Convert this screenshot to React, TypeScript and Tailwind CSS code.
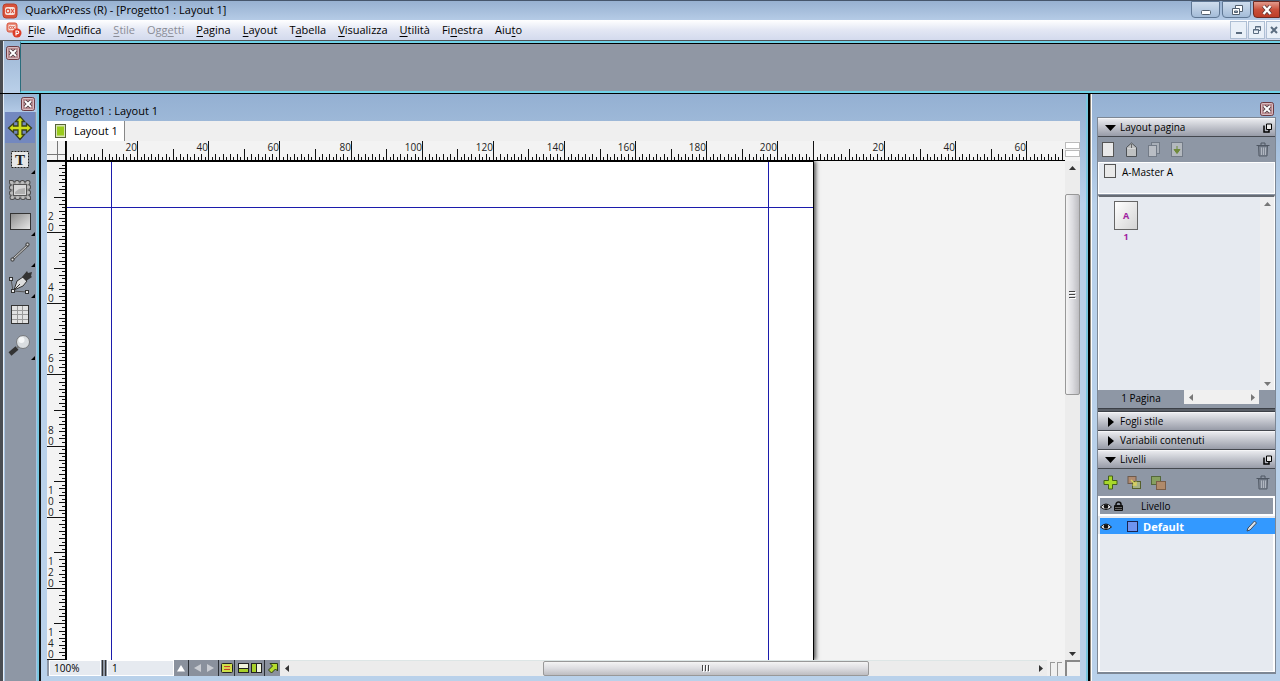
import type { ReactNode } from 'react';

const PX_PER_MM = 3.557;
const PAGE_WIDTH_MM = 210;

type Tick = { pos: number; mm: number };

const makeTicks = (from: number, count: number): Tick[] =>
  Array.from({ length: count }, (_, mm) => ({
    pos: Math.round(from + mm * PX_PER_MM),
    mm,
  }));

const tickLength = (mm: number) => {
  if (mm % 20 === 0) return 19;
  if (mm % 10 === 0) return 11;
  return mm % 2 === 0 ? 6 : 3;
};

const menus = [
  { before: '', key: 'F', after: 'ile' },
  { before: 'M', key: 'o', after: 'difica' },
  { before: '', key: 'S', after: 'tile', disabled: true },
  { before: 'Ogg', key: 'e', after: 'tti', disabled: true },
  { before: '', key: 'P', after: 'agina' },
  { before: '', key: 'L', after: 'ayout' },
  { before: 'T', key: 'a', after: 'bella' },
  { before: '', key: 'V', after: 'isualizza' },
  { before: '', key: 'U', after: 'tilità' },
  { before: 'Fi', key: 'n', after: 'estra' },
  { before: 'Aiu', key: 't', after: 'o' },
];

const AppIcon = () => (
  <svg width="16" height="16" viewBox="0 0 16 16">
    <rect x="1" y="1" width="14" height="14" rx="3" fill="#d9523a" stroke="#b8412d" />
    <rect x="3" y="4" width="10" height="8" rx="2" fill="#f6e3dd" />
    <circle cx="6" cy="8" r="1.8" fill="none" stroke="#d9523a" strokeWidth="1.2" />
    <path d="M9 6l3 4M12 6l-3 4" stroke="#d9523a" strokeWidth="1.2" />
  </svg>
);

const DocumentIcon = () => (
  <svg width="16" height="16" viewBox="0 0 16 16">
    <rect x="1" y="1" width="10" height="9" rx="2" fill="#e8907f" stroke="#d9523a" />
    <rect x="2.500" y="3" width="7" height="5" rx="1" fill="#f8e6e1" />
    <circle cx="4.500" cy="5.500" r="1.200" fill="none" stroke="#d9523a" />
    <path d="M6.500 4l2 3M8.500 4l-2 3" fill="none" stroke="#d9523a" strokeWidth="0.900" />
    <circle cx="11" cy="11" r="4.500" fill="#dc3d28" />
    <path d="M10 13.500V9h1.500a1.300 1.300 0 0 1 0 2.600H10" fill="none" stroke="#fff" strokeWidth="1.100" />
  </svg>
);

const CloseButton = () => (
  <button type="button" aria-label="Chiudi" className="block size-[14px]">
    <svg width="14" height="14" viewBox="0 0 14 14">
      <rect x="0.500" y="0.500" width="13" height="13" rx="2" fill="#b98a8f" stroke="#6d3b43" />
      <rect x="1.500" y="1.500" width="11" height="11" rx="1" fill="none" stroke="#d9bcc0" />
      <path d="M4 4l6 6M10 4l-6 6" stroke="#4b3a40" strokeWidth="3.600" />
      <path d="M4 4l6 6M10 4l-6 6" stroke="#fff" strokeWidth="2" />
    </svg>
  </button>
);

const MinimizeGlyph = () => (
  <svg width="12" height="12" viewBox="0 0 12 12">
    <rect x="1.500" y="6.500" width="9" height="4" rx="1" fill="#fff" stroke="#53606f" />
  </svg>
);

const RestoreGlyph = () => (
  <svg width="12" height="12" viewBox="0 0 12 12">
    <path d="M4.500 1.500h7v6h-7z" fill="#fff" stroke="#53606f" />
    <path d="M1.500 4.500h7v6h-7z" fill="#fff" stroke="#53606f" />
    <path d="M3.500 7h3v1.500h-3z" fill="#9fb7d4" stroke="#53606f" />
  </svg>
);

const CloseGlyph = () => (
  <svg width="12" height="12" viewBox="0 0 12 12">
    <path d="M2.500 2l7 8M9.500 2l-7 8" stroke="#5e3a3a" strokeWidth="4" />
    <path d="M2.500 2l7 8M9.500 2l-7 8" stroke="#fff" strokeWidth="2.400" />
  </svg>
);

const TitleBar = () => (
  <header className="flex h-5 shrink-0 items-center border-t border-[#46566c] bg-linear-to-b from-[#97b1d1] to-[#b5cbe6] pl-[2px]">
    <AppIcon />
    <h1 className="ml-[7px] flex-1 text-[11px] text-black">QuarkXPress (R) - [Progetto1 : Layout 1]</h1>
    <div className="flex gap-[2px] self-start">
      <button type="button" aria-label="Riduci a icona" className="flex h-[17px] w-[29px] items-center justify-center rounded-b border border-[#5f7794] bg-linear-to-b from-[#cfdded] to-[#a4bcd8]">
        <MinimizeGlyph />
      </button>
      <button type="button" aria-label="Ripristina" className="flex h-[17px] w-[29px] items-center justify-center rounded-b border border-[#5f7794] bg-linear-to-b from-[#cfdded] to-[#a4bcd8]">
        <RestoreGlyph />
      </button>
      <button type="button" aria-label="Chiudi finestra" className="flex h-[17px] w-[27px] items-center justify-center rounded-bl border border-[#6d2a22] bg-linear-to-b from-[#e29a8c] via-[#c9503b] to-[#bd3e28]">
        <CloseGlyph />
      </button>
    </div>
  </header>
);

const MenuBar = () => (
  <nav className="flex h-5 shrink-0 items-center bg-linear-to-b from-white via-[#e3e7f4] to-[#d3daed] pl-[6px]">
    <DocumentIcon />
    <div className="ml-[6px] flex flex-1 gap-3">
      {menus.map(({ before, key, after, disabled }) => (
        <button
          key={before + key + after}
          type="button"
          disabled={disabled}
          className="text-[11px] leading-4 text-black disabled:text-[#8b8d97]"
        >
          {before}
          <span className="underline underline-offset-2">{key}</span>
          {after}
        </button>
      ))}
    </div>
    <div className="flex gap-px">
      <button type="button" aria-label="Riduci documento" className="flex h-[18px] w-[17px] items-center justify-center border border-[#aebfd4] bg-[#e9f0f8]">
        <svg width="10" height="10" viewBox="0 0 10 10">
          <path d="M2 8h6" stroke="#5b6d80" strokeWidth="2" />
        </svg>
      </button>
      <button type="button" aria-label="Ripristina documento" className="flex h-[18px] w-[17px] items-center justify-center border border-[#aebfd4] bg-[#e9f0f8]">
        <svg width="10" height="10" viewBox="0 0 10 10">
          <path d="M3.500 4V1.500h5v4H7M3 2h6" fill="none" stroke="#5b6d80" />
          <path d="M1.500 4.500h5v4h-5zM1 5h6" fill="none" stroke="#5b6d80" />
        </svg>
      </button>
      <button type="button" aria-label="Chiudi documento" className="flex h-[18px] w-[14px] items-center justify-center border border-r-0 border-[#aebfd4] bg-[#e9f0f8]">
        <svg width="10" height="10" viewBox="0 0 10 10">
          <path d="M2 2l6 6M8 2l-6 6" stroke="#5b6d80" strokeWidth="2" />
        </svg>
      </button>
    </div>
  </nav>
);

const MeasurementsBar = () => (
  <section className="flex h-[53px] shrink-0 border-t border-[#55585c] bg-[#4a4d52] pl-[3px]">
    <div className="w-[17px] border-l border-[#dfe8f2] bg-linear-to-b from-[#9ab4d3] to-[#bad0e9] pt-[5px] pl-[2px]">
      <CloseButton />
    </div>
    <div className="flex-1 border-y-2 border-l border-[#70d2e8] border-l-[#2a6d7c] bg-[#9097a4]">
      <div className="h-full border-t border-black" />
    </div>
  </section>
);

const tools: { name: string; flyout?: boolean; icon: ReactNode }[] = [
  {
    name: 'Elemento',
    icon: (
      <svg width="26" height="26" viewBox="0 0 26 26">
        <path
          d="M13 1.500l4.500 5H15V11h4.500V8.500l5 4.500-5 4.500V15H15v4.500h2.500l-4.500 5-4.500-5H11V15H6.500v2.500l-5-4.500 5-4.500V11H11V6.500H8.500z"
          fill="#cfe01c"
          stroke="#39411a"
          strokeWidth="1.300"
        />
      </svg>
    ),
  },
  {
    name: 'Contenuto testo',
    flyout: true,
    icon: (
      <svg width="26" height="26" viewBox="0 0 26 26">
        <rect x="4.500" y="5.500" width="17" height="16" fill="#e7e7e7" stroke="#222" strokeDasharray="2 1" />
        <text x="13" y="19" textAnchor="middle" fontSize="15" fontWeight="700" fontFamily="Liberation Serif" fill="#222">
          T
        </text>
      </svg>
    ),
  },
  {
    name: 'Contenuto immagine',
    icon: (
      <svg width="26" height="26" viewBox="0 0 26 26">
        <rect x="4.500" y="5.500" width="17" height="15" fill="none" stroke="#4c4c4c" strokeWidth="5" strokeLinecap="round" strokeDasharray="0.500 4.830" />
        <rect x="4.500" y="5.500" width="17" height="15" fill="#999" stroke="#bcbcbc" strokeWidth="3" strokeLinecap="round" strokeDasharray="0.500 4.830" />
        <rect x="6.500" y="7.500" width="13" height="11" fill="#d8d8d8" stroke="#555" />
        <path d="M8 15l4-3 6-1v6H8z" fill="#b0b0b0" />
      </svg>
    ),
  },
  {
    name: 'Riquadro rettangolare',
    flyout: true,
    icon: (
      <svg width="26" height="26" viewBox="0 0 26 26">
        <defs>
          <linearGradient id="box" x1="0" y1="0" x2="1" y2="1">
            <stop offset="0" stopColor="#8b8b8b" />
            <stop offset="1" stopColor="#e8e8e8" />
          </linearGradient>
        </defs>
        <rect x="3.500" y="5.500" width="20" height="16" fill="url(#box)" stroke="#333" />
      </svg>
    ),
  },
  {
    name: 'Linea',
    flyout: true,
    icon: (
      <svg width="26" height="26" viewBox="0 0 26 26">
        <path d="M6 20L21 6" stroke="#555" strokeWidth="2.500" />
        <path d="M6 20L21 6" stroke="#ddd" />
        <rect x="4" y="19" width="3" height="3" rx="1" fill="#ddd" stroke="#333" />
        <rect x="19" y="4" width="3" height="3" rx="1" fill="#ddd" stroke="#333" />
      </svg>
    ),
  },
  {
    name: 'Penna Bézier',
    flyout: true,
    icon: (
      <svg width="26" height="26" viewBox="0 0 26 26">
        <path d="M4 9l2 12 14 1" fill="none" stroke="#555" />
        <path d="M7 20l3-9 6-4 4 4-4 5z" fill="#dedede" stroke="#333" />
        <path d="M7 20l6-6" stroke="#333" />
        <path d="M15 7l5-6 1 2 4-1-1 4 1 1-6 4z" fill="#333" />
        <rect x="2.500" y="7.500" width="3" height="3" fill="#eee" stroke="#333" />
        <rect x="4.500" y="19.500" width="3" height="3" fill="#eee" stroke="#333" />
        <rect x="18.500" y="20.500" width="3" height="3" fill="#eee" stroke="#333" />
      </svg>
    ),
  },
  {
    name: 'Tabella',
    icon: (
      <svg width="26" height="26" viewBox="0 0 26 26">
        <rect x="4.500" y="4.500" width="17" height="18" fill="#e2e2e2" stroke="#333" />
        <path d="M10.500 5v17M15.500 5v17M5 9.500h16M5 13.500h16M5 18.500h16" stroke="#999" />
      </svg>
    ),
  },
  {
    name: 'Zoom',
    flyout: true,
    icon: (
      <svg width="26" height="26" viewBox="0 0 26 26">
        <path d="M3 22l7-6" stroke="#333" strokeWidth="4.500" />
        <path d="M10 16l2-2" stroke="#777" strokeWidth="2" />
        <circle cx="16" cy="10" r="6.500" fill="#d9dde0" stroke="#77797c" />
        <circle cx="14.500" cy="8" r="3" fill="#f5f7f8" />
      </svg>
    ),
  },
];

const Toolbox = () => (
  <aside className="flex w-[41px] shrink-0 border-r-2 border-[#111] bg-[#4a4d52] pl-[3px]">
    <div className="flex flex-1 flex-col border-r-2 border-l border-[#79c6df] border-l-[#e6eef6] bg-[#a9c3e0]">
      <div className="flex h-[18px] justify-end bg-linear-to-b from-[#9ab4d3] to-[#b3cae6] pt-[3px] pr-[2px]">
        <CloseButton />
      </div>
      <div className="mr-px ml-px flex flex-1 flex-col bg-[#8e97a5] pr-px">
        {tools.map(({ name, flyout, icon }, index) => (
          <button
            key={name}
            type="button"
            aria-label={name}
            aria-pressed={index === 0}
            className="relative flex h-[31px] items-center justify-center aria-pressed:bg-[#7388bf]"
          >
            {icon}
            {flyout && (
              <svg width="4" height="4" className="absolute right-0 bottom-0">
                <path d="M4 0v4H0z" fill="#000" />
              </svg>
            )}
          </button>
        ))}
      </div>
    </div>
  </aside>
);

const horizontalTicks = [
  ...makeTicks(19, PAGE_WIDTH_MM),
  ...makeTicks(19 + PAGE_WIDTH_MM * PX_PER_MM, 71),
];

const HorizontalRuler = () => (
  <div className="h-5 min-w-0 flex-1 overflow-hidden border-b border-black bg-[#f3f3f3]">
    <svg width="1018" height="19" className="block">
      <path d="M0 13.500h19M10.500 0v19" stroke="#777" />
      <path d="M19 0v19" stroke="#000" strokeWidth="2" />
      {horizontalTicks.map(({ pos, mm }) => (
        <g key={pos}>
          <path d={`M${pos + 0.5} ${19 - tickLength(mm)}V19`} stroke="#111" />
          {mm > 0 && mm % 20 === 0 && (
            <text x={pos} y="10" textAnchor="end" fontSize="10" fill="#222">
              {mm}
            </text>
          )}
        </g>
      ))}
    </svg>
  </div>
);

const verticalTicks = makeTicks(0, 141);

const VerticalRuler = () => (
  <div className="w-5 shrink-0 overflow-hidden border-r-2 border-black bg-[#f3f3f3]">
    <svg width="18" height="499" className="block">
      {verticalTicks.map(({ pos, mm }) => {
        const digits = String(mm).split('');
        return (
          <g key={pos}>
            <path d={`M${18 - tickLength(mm)} ${pos + 0.5}H18`} stroke="#111" />
            {mm > 0 && mm % 20 === 0 && (
              <text y={pos - 1 - digits.length * 11} fontSize="10" fill="#222">
                {digits.map((digit, i) => (
                  <tspan key={i} x="1" dy="11">
                    {digit}
                  </tspan>
                ))}
              </text>
            )}
          </g>
        );
      })}
    </svg>
  </div>
);

type Direction = 'up' | 'down' | 'left' | 'right';

const arrowPaths: Record<Direction, string> = {
  up: 'M0 5l3.500-4L7 5z',
  down: 'M0 2l3.500 4L7 2z',
  left: 'M5 0L1 3.500 5 7z',
  right: 'M2 0l4 3.500L2 7z',
};

const ScrollArrow = ({ direction, color = '#333' }: { direction: Direction; color?: string }) => (
  <button type="button" aria-label={direction} className="flex size-[14px] shrink-0 items-center justify-center">
    <svg width="7" height="7" viewBox="0 0 7 7">
      <path d={arrowPaths[direction]} fill={color} />
    </svg>
  </button>
);

const VerticalScrollbar = () => (
  <div className="flex w-[15px] shrink-0 flex-col bg-[#ececec]">
    <ScrollArrow direction="up" />
    <div className="grow-19 basis-0" />
    <div className="flex grow-200 basis-0 items-center justify-center rounded-xs border border-[#989898] bg-linear-to-r from-[#f4f4f4] via-[#dcdce0] to-[#bdbdc1]">
      <svg width="7" height="8">
        <path d="M0 .5h6M0 3.500h6M0 6.500h6" stroke="#444" />
        <path d="M1 1.500h6M1 4.500h6M1 7.500h6" stroke="#fff" />
      </svg>
    </div>
    <div className="grow-252 basis-0" />
    <ScrollArrow direction="down" />
  </div>
);

const HorizontalScrollbar = () => (
  <div className="flex min-w-0 flex-1 items-stretch border-t border-[#dde6e6] bg-[#ececec]">
    <ScrollArrow direction="left" />
    <div className="grow-250 basis-0" />
    <div className="flex grow-325 basis-0 items-center justify-center rounded-xs border border-[#989898] bg-linear-to-b from-[#f4f4f4] via-[#dcdce0] to-[#bdbdc1]">
      <svg width="8" height="7">
        <path d="M.5 0v6M3.500 0v6M6.500 0v6" stroke="#444" />
        <path d="M1.500 1v6M4.500 1v6M7.500 1v6" stroke="#fff" />
      </svg>
    </div>
    <div className="grow-164 basis-0" />
    <ScrollArrow direction="right" />
  </div>
);

const Canvas = () => (
  <div className="min-w-0 flex-1 overflow-hidden bg-[#f3f3f3]">
    <div className="relative h-full w-[747px] border-t border-r border-black bg-white shadow-[2px_0_4px_#555]">
      <div className="absolute inset-x-0 top-[45px] border-t border-[#1c1cac]" />
      <div className="absolute inset-y-0 left-[44px] border-l border-[#1c1cac]" />
      <div className="absolute inset-y-0 right-[44px] border-l border-[#1c1cac]" />
    </div>
  </div>
);

const StatusBar = () => (
  <div className="flex h-4 shrink-0 bg-[#8e97a5]">
    <input
      aria-label="Zoom"
      defaultValue="100%"
      className="ml-[2px] w-[52px] border border-white bg-[#e6eaf0] pl-1 text-[10px] text-black"
    />
    <div className="ml-px w-[4px] border-x border-[#333]" />
    <input
      aria-label="Pagina"
      defaultValue="1"
      className="ml-px w-[67px] border border-white bg-[#e6eaf0] pl-1 text-[10px] text-black"
    />
    <div className="flex divide-x divide-[#2c3036] bg-[#8a919d]">
      <button type="button" aria-label="Pagina mastro" className="flex w-[15px] items-center justify-center">
        <svg width="8" height="7">
          <path d="M0 6.500L4 0l4 6.500z" fill="#fff" />
        </svg>
      </button>
      <div className="flex w-[30px] items-center justify-center gap-[6px]">
        <button type="button" aria-label="Pagina precedente">
          <svg width="7" height="8" className="block">
            <path d="M7 0v8L0 4z" fill="#c9ccd2" />
          </svg>
        </button>
        <button type="button" aria-label="Pagina successiva">
          <svg width="7" height="8" className="block">
            <path d="M0 0v8l7-4z" fill="#c9ccd2" />
          </svg>
        </button>
      </div>
      <button type="button" aria-label="Anteprima" className="flex w-4 items-center justify-center">
        <svg width="12" height="10">
          <rect x=".5" y=".5" width="11" height="9" rx="1" fill="#cfe04a" stroke="#222" />
          <path d="M3 3.500h6M3 6.500h6" stroke="#c2452b" />
          <path d="M4 5h6" stroke="#f3b04a" />
        </svg>
      </button>
      <div className="flex w-[30px] items-center justify-center gap-[2px]">
        <button type="button" aria-label="Dividi orizzontalmente">
          <svg width="11" height="10" className="block">
            <rect x=".5" y=".5" width="10" height="9" fill="#f0f4dc" stroke="#222" />
            <path d="M1 6h9v3H1z" fill="#a8d02a" />
            <path d="M1 5.500h9" stroke="#222" />
          </svg>
        </button>
        <button type="button" aria-label="Dividi verticalmente">
          <svg width="11" height="10" className="block">
            <rect x=".5" y=".5" width="10" height="9" fill="#f0f4dc" stroke="#222" />
            <path d="M1 1h4v8H1z" fill="#a8d02a" />
            <path d="M5.500 1v8" stroke="#222" />
          </svg>
        </button>
      </div>
      <button type="button" aria-label="Esporta" className="flex w-[15px] items-center justify-center">
        <svg width="12" height="12" viewBox="0 0 12 12">
          <path d="M3 1.500h7.500V9L8.500 7l-4 4-3-3 4-4z" fill="#b5dc2c" stroke="#2c3a10" />
        </svg>
      </button>
    </div>
    <HorizontalScrollbar />
    <div className="flex w-[18px] justify-center gap-[2px] bg-[#f0f0f0] pt-[2px]">
      <div className="w-[5px] border-t border-l border-[#999]" />
      <div className="w-[5px] border-t border-l border-[#999]" />
    </div>
    <div className="w-[15px] border-t-2 border-l-2 border-[#888] bg-[#f0f0f0]" />
  </div>
);

const DocumentWindow = () => (
  <main className="flex min-w-0 flex-1 flex-col bg-[#b9d1ea] bg-linear-to-b from-[#94b0d2] to-[#b9d1ea] to-[110px] px-[6px] pb-[5px]">
    <h2 className="flex h-[27px] shrink-0 items-center pt-[7px] pl-2 text-[11px] text-black">Progetto1 : Layout 1</h2>
    <div className="flex h-5 shrink-0 bg-[#efefef]">
      <button type="button" className="flex items-center gap-2 border-r border-[#888] bg-white pr-[6px] pl-2 text-[11px] text-black">
        <svg width="11" height="14">
          <rect x=".5" y=".5" width="10" height="13" fill="#d8e3b4" stroke="#56633a" />
          <rect x="2" y="2.500" width="7" height="9" fill="#9acb1c" />
        </svg>
        Layout 1
      </button>
    </div>
    <div className="flex shrink-0">
      <HorizontalRuler />
      <div className="flex w-[15px] flex-col gap-px bg-[#f3f3f3] pt-px">
        <div className="h-[7px] border border-[#bbb] bg-white" />
        <div className="h-[7px] border border-[#bbb] bg-white" />
      </div>
    </div>
    <div className="flex min-h-0 flex-1">
      <VerticalRuler />
      <Canvas />
      <VerticalScrollbar />
    </div>
    <StatusBar />
  </main>
);

const SectionHeader = ({ title, open }: { title: string; open?: boolean }) => (
  <button
    type="button"
    aria-expanded={!!open}
    className="flex h-[19px] w-full shrink-0 items-center border-y border-t-[#f5f5f7] border-b-[#44484f] bg-linear-to-b from-[#e9eaee] to-[#989ca8] pr-[2px] pl-[7px] text-left text-[10px] text-black"
  >
    <svg width="12" height="10" className="mr-[3px]">
      <path d={open ? 'M0 2h11L5.500 8z' : 'M3 0v10l6-5z'} fill="#000" />
    </svg>
    <span className="flex-1">{title}</span>
    {open && (
      <svg width="10" height="10">
        <path d="M3.500 1v5.500h5V1z" fill="#e8e8e8" stroke="#000" />
        <path d="M1 2.500v6.500h5V7" fill="none" stroke="#000" strokeWidth="1.500" />
      </svg>
    )}
  </button>
);

const TrashIcon = () => (
  <svg width="14" height="15" viewBox="0 0 14 15">
    <path d="M2.500 4h9l-.5 10H3z" fill="#7d8592" stroke="#565e6a" />
    <path d="M.5 3.500h13M5 3V1h4v2" fill="none" stroke="#4f5763" />
    <path d="M5.500 5.500V13M7.500 5.500V13M9.500 5.500V13" stroke="#b0b6c0" />
  </svg>
);

const IconButton = ({ label, children }: { label: string; children: ReactNode }) => (
  <button type="button" aria-label={label} className="flex size-4 items-center justify-center">
    {children}
  </button>
);

const PageLayoutSection = () => (
  <section className="flex shrink-0 flex-col">
    <SectionHeader title="Layout pagina" open />
    <div className="flex h-[25px] items-center gap-[7px] pr-1 pl-[2px]">
      <IconButton label="Nuova pagina">
        <svg width="12" height="15">
          <rect x=".5" y=".5" width="11" height="14" fill="#e9e9e9" stroke="#555" />
        </svg>
      </IconButton>
      <IconButton label="Inserisci sezione">
        <svg width="13" height="16">
          <path d="M1.500 5.500L6.500 1l5 4.500v9h-10z" fill="#bfc1c2" stroke="#4c5054" />
          <path d="M6.500 2v4" fill="none" stroke="#666" />
          <path d="M2.500 6.500h8" stroke="#d6d8d8" />
        </svg>
      </IconButton>
      <IconButton label="Duplica pagina">
        <svg width="14" height="15">
          <rect x="4.500" y=".5" width="8" height="11" fill="#a9afb8" stroke="#737b87" />
          <rect x="1.500" y="3.500" width="8" height="11" fill="#b9bdc4" stroke="#737b87" />
        </svg>
      </IconButton>
      <IconButton label="Applica mastro">
        <svg width="12" height="15">
          <rect x=".5" y=".5" width="11" height="14" fill="#b3b8be" stroke="#737b87" />
          <path d="M6 4v4M3 7.500h6L6 11.500z" fill="#6f8a3a" stroke="#6f8a3a" />
        </svg>
      </IconButton>
      <div className="flex-1" />
      <IconButton label="Elimina pagina">
        <TrashIcon />
      </IconButton>
    </div>
    <div className="flex h-8 items-start border border-white bg-[#e6eaf0] pt-px pl-[5px]">
      <svg width="12" height="15">
        <rect x=".5" y=".5" width="11" height="13" fill="#e9e9e9" stroke="#555" />
      </svg>
      <span className="ml-[6px] text-[10px] leading-4 text-black">A-Master A</span>
    </div>
    <div className="mt-px flex h-[195px] border border-t-2 border-b-0 border-white border-t-[#666b73] bg-[#e6eaf0]">
      <div className="flex-1 pt-1 pl-[15px]">
        <button type="button" className="flex w-6 flex-col items-center text-[9px] font-bold text-[#a020a0]">
          <span className="flex h-[29px] w-6 items-center justify-center border border-[#666] bg-linear-to-br from-white to-[#d4d4d4]">
            A
          </span>
          <span className="leading-[14px]">1</span>
        </button>
      </div>
      <div className="flex w-[14px] flex-col justify-between bg-[#eeeeef]">
        <ScrollArrow direction="up" color="#777" />
        <ScrollArrow direction="down" color="#777" />
      </div>
    </div>
    <div className="flex h-[14px]">
      <span className="flex-1 text-center text-[10px] leading-4 text-black">1 Pagina</span>
      <div className="mr-4 flex w-[75px] justify-between bg-[#f0f0f0]">
        <ScrollArrow direction="left" color="#777" />
        <ScrollArrow direction="right" color="#777" />
      </div>
    </div>
    <div className="mt-1 h-1 border-y border-[#3c4047] bg-[#5a5f67]" />
  </section>
);

const EyeIcon = () => (
  <svg width="12" height="9" viewBox="0 0 12 9">
    <path d="M.5 5Q6-1 11.500 5 6 10 .5 5z" fill="#e8e8e8" stroke="#111" />
    <circle cx="6" cy="4.500" r="2.300" fill="#111" />
  </svg>
);

const LayersSection = () => (
  <section className="flex min-h-0 flex-1 flex-col">
    <SectionHeader title="Livelli" open />
    <div className="flex h-[27px] shrink-0 items-center gap-2 px-1">
      <IconButton label="Nuovo livello">
        <svg width="15" height="15">
          <path d="M5.500 1h4v4.500H14v4H9.500V14h-4V9.500H1v-4h4.500z" fill="#a8d82a" stroke="#44601a" />
        </svg>
      </IconButton>
      <IconButton label="Sposta elemento">
        <svg width="15" height="15">
          <rect x="1" y="1.500" width="8" height="7" fill="#b08a70" stroke="#6d5a4c" />
          <rect x="5.500" y="6.500" width="8" height="7" fill="#a5b183" stroke="#56602c" />
          <path d="M4 5l5 5M9 6.500V10H5.500" fill="none" stroke="#d8d060" strokeWidth="1.500" />
        </svg>
      </IconButton>
      <IconButton label="Unisci livelli">
        <svg width="15" height="15">
          <rect x=".5" y="1.500" width="9" height="8" fill="#86a060" stroke="#54683a" />
          <rect x="5.500" y="6.500" width="9" height="8" fill="#b08a6a" stroke="#7a5e48" />
        </svg>
      </IconButton>
      <div className="flex-1" />
      <IconButton label="Elimina livello">
        <TrashIcon />
      </IconButton>
    </div>
    <table className="w-full shrink-0 border-separate border-spacing-0 bg-[#e6eaf0] text-left text-black">
      <thead>
        <tr className="h-[20px] bg-[#8e97a5] text-[10px] leading-none">
          <th className="w-[25px] border-2 border-r-0 border-white p-0 font-normal">
            <div className="flex items-center gap-[2px]">
              <EyeIcon />
              <svg width="9" height="10">
                <path d="M2 5V3.500a2.500 2.500 0 0 1 5 0V5" fill="none" stroke="#111" strokeWidth="1.500" />
                <rect x="0" y="4" width="9" height="6" rx="1" fill="#111" />
                <path d="M1 6.500h7M1 8.500h7" stroke="#666" />
              </svg>
            </div>
          </th>
          <th colSpan={2} className="border-2 border-l-0 border-white py-0 pr-0 pl-[18px] font-normal">Livello</th>
        </tr>
      </thead>
      <tbody>
        <tr className="h-[18px] bg-[#3399ff] text-[11px] leading-none text-white">
          <td className="border-t-2 border-l-2 border-[#e6eaf0] p-0"><EyeIcon /></td>
          <td className="border-t-2 border-[#e6eaf0] py-0 pl-1">
            <div className="flex items-center gap-[5px] font-bold">
              <svg width="11" height="11">
                <rect x=".5" y=".5" width="10" height="10" fill="#6f94f0" stroke="#1a2450" />
              </svg>
              Default
            </div>
          </td>
          <td className="w-[29px] border-t-2 border-[#e6eaf0] p-0">
            <svg width="11" height="12">
              <path d="M1 11l1-3 6.500-7 2 2L4 10z" fill="#dde3ea" stroke="#3d4a5c" />
            </svg>
          </td>
        </tr>
      </tbody>
    </table>
    <div className="flex-1 border-x-2 border-t-0 border-b border-white bg-[#e6eaf0]" />
  </section>
);

const Palettes = () => (
  <aside className="flex w-[194px] shrink-0 border-l-2 border-[#79c6df] bg-[#b9d1ea]">
    <div className="w-1 border-r border-l-2 border-white border-l-black bg-[#8a8378]" />
    <div className="flex min-w-0 flex-1 flex-col bg-linear-to-b from-[#94b0d2] to-[#b9d1ea] to-[110px] pr-1 pb-[7px] pl-[5px]">
      <div className="flex h-[23px] shrink-0 items-end justify-end pr-[2px] pb-px">
        <CloseButton />
      </div>
      <div className="flex min-h-0 flex-1 flex-col border border-b-2 border-[#7d8794] bg-[#8e97a5]">
        <PageLayoutSection />
        <SectionHeader title="Fogli stile" />
        <SectionHeader title="Variabili contenuti" />
        <LayersSection />
      </div>
    </div>
  </aside>
);

const App = () => (
  <div className="flex h-screen flex-col overflow-hidden bg-[#b9d1ea] font-['Open_Sans','Noto_Sans',sans-serif]">
    <TitleBar />
    <MenuBar />
    <MeasurementsBar />
    <div className="flex min-h-0 flex-1 border-t border-black">
      <Toolbox />
      <DocumentWindow />
      <Palettes />
    </div>
  </div>
);

export default App;
